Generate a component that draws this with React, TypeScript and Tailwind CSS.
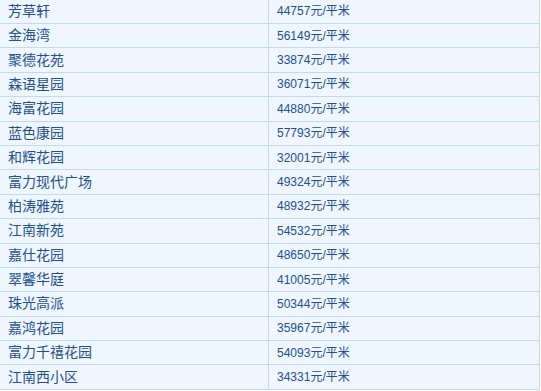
import React from 'react';

const rows: [string, string][] = [
  ['芳草轩', '44757'],
  ['金海湾', '56149'],
  ['聚德花苑', '33874'],
  ['森语星园', '36071'],
  ['海富花园', '44880'],
  ['蓝色康园', '57793'],
  ['和辉花园', '32001'],
  ['富力现代广场', '49324'],
  ['柏涛雅苑', '48932'],
  ['江南新苑', '54532'],
  ['嘉仕花园', '48650'],
  ['翠馨华庭', '41005'],
  ['珠光高派', '50344'],
  ['嘉鸿花园', '35967'],
  ['富力千禧花园', '54093'],
  ['江南西小区', '34331'],
];

const App: React.FC = () => {
  return (
    <div className="w-[541px] h-[391px] overflow-hidden bg-white">
      <div className="w-[540px] -mt-[0.4px] border-r border-[#c3d9ee] bg-[#eff6ff] font-['Liberation_Sans','Noto_Sans_CJK_SC',sans-serif] text-[#22508e]">
        {rows.map(([name, price]) => (
          <div key={name} className="flex h-[24.4px] border-b border-[#c3d9ee]">
            <div className="w-[269px] flex items-center pl-2 border-r border-[#c3d9ee] text-[14px]">
              {name}
            </div>
            <div className="flex-1 flex items-center pl-2 text-[12px]">
              {price}元/平米
            </div>
          </div>
        ))}
      </div>
    </div>
  );
};

export default App;
